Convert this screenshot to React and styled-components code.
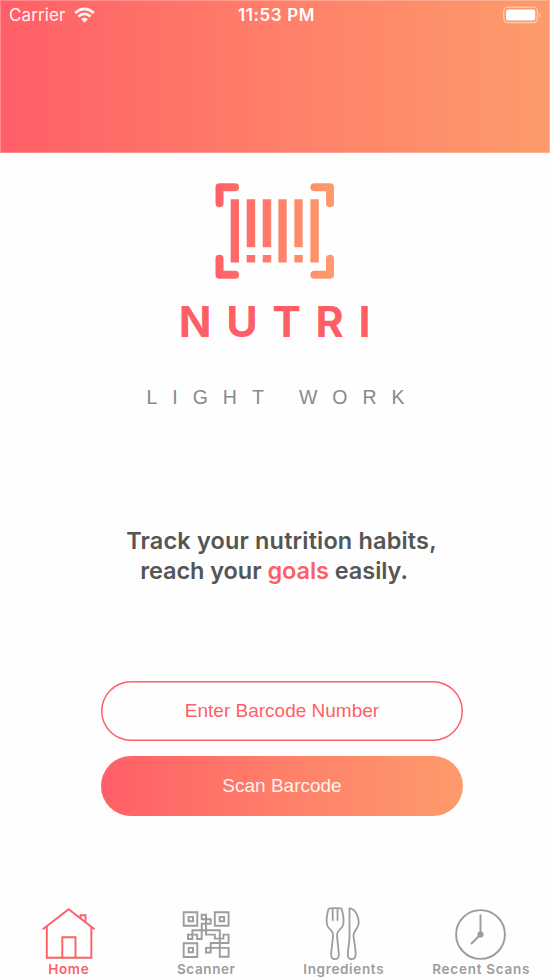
import React from 'react';
import styled, { createGlobalStyle } from 'styled-components';

const coral = '#fe5f66';
const gradient = 'linear-gradient(90deg, #ff5f67 0%, #ff7f6a 50%, #fd9b6b 100%)';

const GlobalStyle = createGlobalStyle`
  *, *::before, *::after { box-sizing: border-box; }
  body { margin: 0; background: #fefefe; }
`;

const Screen = styled.div`
  width: 550px;
  height: 978px;
  display: flex;
  flex-direction: column;
  overflow: hidden;
  background: #fefefe;
  font-family: Inter, 'Liberation Sans', sans-serif;
`;

const Header = styled.header`
  flex: none;
  height: 153px;
  background: ${gradient};
  box-shadow: inset 0 0 0 1px rgba(255, 255, 255, 0.25);
`;

const StatusBar = styled.div`
  display: grid;
  grid-template-columns: 1fr auto 1fr;
  align-items: center;
  height: 30px;
  padding: 0 8px 0 9px;
  color: #fff;
  font-size: 17px;
  line-height: 20px;
`;

const Carrier = styled.div`
  display: flex;
  align-items: center;
  gap: 8px;
  letter-spacing: 0.12px;
  opacity: 0.93;
`;

const Time = styled.div`
  padding-left: 2px;
  font-weight: 600;
  font-size: 17px;
  letter-spacing: 0.6px;
`;

const BatterySlot = styled.div`
  display: flex;
  justify-content: flex-end;
`;

const Main = styled.main`
  flex: 1;
  display: flex;
  flex-direction: column;
  align-items: center;
`;

const Icon = styled.svg`
  display: block;
  flex: none;
`;

const LogoMark = styled(Icon)`
  margin: 30px 2px 0 0;
`;

const BrandName = styled.h1`
  margin: 20px 0 0;
  padding-left: 14px;
  font-size: 43px;
  line-height: 44px;
  font-weight: 700;
  letter-spacing: 14.6px;
  color: ${coral};
`;

const Motto = styled.p`
  margin: 42px 0 0;
  padding-left: 16px;
  font-family: 'Liberation Sans', sans-serif;
  font-size: 19.5px;
  line-height: 24px;
  letter-spacing: 15px;
  white-space: pre;
  color: #858a90;
`;

const Pitch = styled.p`
  margin: 117px 0 0;
  padding-left: 13px;
  font-size: 23.5px;
  line-height: 30px;
  font-weight: 600;
  letter-spacing: 0.16px;
  text-align: center;
  color: #555;
`;

const PitchEnd = styled.span`
  padding-right: 15px;
  letter-spacing: -0.05px;
`;

const Accent = styled.span`
  color: ${coral};
`;

const Actions = styled.div`
  display: flex;
  flex-direction: column;
  gap: 15px;
  width: 362px;
  margin: 95px 0 0 14px;
`;

const Button = styled.button`
  height: 60px;
  padding: 0;
  border: none;
  border-radius: 30px;
  background: ${(p) => (p.$filled ? gradient : 'transparent')};
  box-shadow: ${(p) => (p.$filled ? 'none' : `inset 0 0 0 1.5px ${coral}`)};
  color: ${(p) => (p.$filled ? '#fff2ee' : coral)};
  font-family: 'Liberation Sans', sans-serif;
  font-size: 19px;
`;

const TabBar = styled.nav`
  flex: none;
  display: grid;
  grid-template-columns: repeat(4, 1fr);
  height: 72px;
`;

const Tab = styled.a`
  display: flex;
  flex-direction: column;
  align-items: center;
  color: ${(p) => (p.$active ? coral : '#9c9c9c')};
`;

const TabLabel = styled.span`
  margin-top: -1px;
  font-size: 13.5px;
  line-height: 16px;
  font-weight: 600;
  letter-spacing: ${(p) => p.$tracking};
  white-space: nowrap;
`;

const WifiIcon = () => (
  <Icon width="21" height="16" viewBox="0 0 21 16" fill="none" stroke="#fff" strokeWidth="2.7">
    <path d="M1.2 5.9Q10.5-2.2 19.8 5.9" />
    <path d="M4.4 9.6Q10.5 4.2 16.6 9.6" />
    <path d="M7.2 12.2Q10.5 9.5 13.8 12.2L10.5 15.5Z" fill="#fff" stroke="none" />
  </Icon>
);

const BatteryIcon = () => (
  <Icon width="39" height="18" viewBox="0 0 39 18">
    <rect x="0.8" y="1.2" width="33.6" height="15.4" rx="4" fill="none" stroke="#fff" strokeWidth="1.3" opacity="0.5" />
    <rect x="3" y="3.4" width="29.2" height="11" rx="2" fill="#fff" />
    <path d="M36.5 6.2q2.7 2.8 0 5.6z" fill="#fff" opacity="0.55" />
  </Icon>
);

const BarcodeLogo = () => (
  <LogoMark width="119" height="96" viewBox="0 0 119 96">
    <defs>
      <linearGradient id="mark" gradientUnits="userSpaceOnUse" x1="0" y1="48" x2="119" y2="48">
        <stop offset="0" stopColor="#ff5f67" />
        <stop offset="0.5" stopColor="#ff7f6a" />
        <stop offset="1" stopColor="#fd9b6b" />
      </linearGradient>
    </defs>
    <g fill="none" stroke="url(#mark)" strokeWidth="8" strokeLinecap="round" strokeLinejoin="round">
      <path d="M4.5 20.3V4.3H20.1M99.4 4.3H115V20.3M4.5 75.8V91.8H20.1M99.4 91.8H115V75.8" />
    </g>
    <path
      fill="url(#mark)"
      d="M15.7 16.2h8.3v63.4h-8.3zM31.7 16.2h8.5v48h-8.5zM31.7 72h8.5v7.6h-8.5zM47.7 16.2h8.5v48h-8.5zM47.7 72h8.5v7.6h-8.5zM63.4 16.2h8.3v63.4h-8.3zM79.4 16.2h8.3v48h-8.3zM79.4 72h8.3v7.6h-8.3zM95.4 16.2h8.4v63.4h-8.4z"
    />
  </LogoMark>
);

const HomeIcon = () => (
  <Icon width="56" height="56" viewBox="0 0 56 56" fill="none" stroke="currentColor" strokeWidth="1.9">
    <path d="M1.8 23.3L27.6 3.3L53.6 23.3M5.8 20.5V51.8H50.3V20.8" />
    <path d="M21.3 51.5V31.2H34.5V51.5M39.5 12.2V9.3H44.5V15.9" />
  </Icon>
);

const QrIcon = () => (
  <Icon width="56" height="56" viewBox="0 0 56 56" fill="none" stroke="currentColor" strokeWidth="1.9">
    <path d="M5.7 6.3H19.3V19.8H5.7ZM36.8 6.3H50.6V19.8H36.8ZM5.7 37.2H19.3V51H5.7ZM41.8 41.9H50.6V50.8H41.8Z" />
    <path d="M10.6 10.9H15V15.3H10.6ZM41.7 10.9H46.1V15.3H41.7ZM10.6 41.9H15V46.3H10.6Z" />
    <path d="M23.7 8.8H28V13.3H23.7ZM28 13.3H32.7V17.8H28ZM10 28.6H14.4V33H10Z" />
    <path d="M28 17.8H23.7V33H19.1V28.6H14.4V24.2H41.8V41.9" />
    <path d="M28 17.8V28.6H36.8V32.6H45.4V28.6H50.6V37H32.7V41.9M45.4 28.6V32.6" />
    <path d="M28 41.9H32.7V46.5H28ZM32.7 41.9H41.8" />
  </Icon>
);

const CutleryIcon = () => (
  <Icon width="56" height="56" viewBox="0 0 56 56" fill="none" stroke="currentColor" strokeWidth="1.8" strokeLinejoin="round">
    <path d="M12.5 3C10.8 9 10.2 16.5 11.5 20C12.7 23 16.7 24 17 28C17.2 33 15.3 42 15.2 49C15.2 54.6 22.8 54.6 22.8 49C22.6 42 20.9 33 21.1 28C21.4 24 25.5 23 26.7 20C28 16.5 27.4 9 25.7 3C25 1.8 13.2 1.8 12.5 3ZM16.7 2.5V14.7M21.5 2.5V14.7" />
    <path d="M33.5 2.3C39 2.3 43 11 42.8 17C42.5 22.5 37.5 25 37.5 29C37.5 34 40 42 39.6 49C39.3 54.6 32 54.6 31.8 49C31.7 43 34 35 33.5 28Z" />
  </Icon>
);

const ClockIcon = () => (
  <Icon width="56" height="56" viewBox="0 0 56 56" fill="none" stroke="currentColor" strokeWidth="1.9" strokeLinecap="round">
    <circle cx="27.5" cy="28.5" r="24.4" />
    <path d="M27.5 9.3V28.5L18.5 37.5" />
    <circle cx="27.5" cy="28.5" r="3.1" fill="currentColor" stroke="none" />
  </Icon>
);

const tabs = [
  { label: 'Home', Glyph: HomeIcon, active: true, tracking: '0.7px' },
  { label: 'Scanner', Glyph: QrIcon, tracking: '0.6px' },
  { label: 'Ingredients', Glyph: CutleryIcon, tracking: '0.65px' },
  { label: 'Recent Scans', Glyph: ClockIcon, tracking: '0.75px' },
];

export default function App() {
  return (
    <Screen>
      <GlobalStyle />
      <Header>
        <StatusBar>
          <Carrier>
            Carrier
            <WifiIcon />
          </Carrier>
          <Time>11:53 PM</Time>
          <BatterySlot>
            <BatteryIcon />
          </BatterySlot>
        </StatusBar>
      </Header>
      <Main>
        <BarcodeLogo />
        <BrandName>NUTRI</BrandName>
        <Motto>LIGHT WORK</Motto>
        <Pitch>
          Track your nutrition habits,
          <br />
          <PitchEnd>
            reach your <Accent>goals</Accent> easily.
          </PitchEnd>
        </Pitch>
        <Actions>
          <Button type="button">Enter Barcode Number</Button>
          <Button type="button" $filled>Scan Barcode</Button>
        </Actions>
      </Main>
      <TabBar>
        {tabs.map(({ label, Glyph, active, tracking }) => (
          <Tab key={label} $active={active}>
            <Glyph />
            <TabLabel $tracking={tracking}>{label}</TabLabel>
          </Tab>
        ))}
      </TabBar>
    </Screen>
  );
}
